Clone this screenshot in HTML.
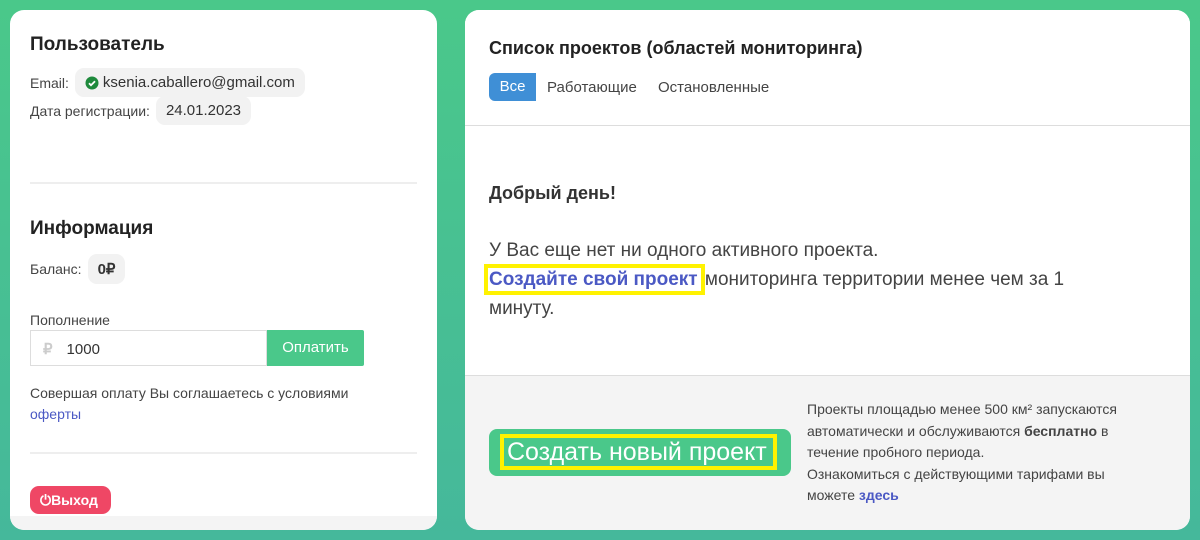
<!DOCTYPE html>
<html><head><meta charset="utf-8"><style>
*{box-sizing:border-box;margin:0;padding:0}
body{width:1200px;height:540px;overflow:hidden;background:linear-gradient(180deg,#4ac88a 0%,#45b89b 100%);font-family:"Liberation Sans",sans-serif;color:#333;position:relative}
.card{position:absolute;background:#fff;border-radius:14px;overflow:hidden}
#l{left:10px;top:10px;width:427px;height:520px}
#r{left:465px;top:10px;width:725px;height:520px}
h2{font-size:19px;font-weight:bold;color:#222}
.row{position:absolute;left:20px;font-size:14px;color:#444;display:flex;align-items:center}
.pill{background:#f2f2f2;border-radius:9px;padding:6px 10px;margin-left:6px;color:#333}
.hr{position:absolute;left:20px;width:387px;height:2px;background:#eee}
</style></head><body>
<div class="card" id="l">
 <h2 style="position:absolute;left:20px;top:24px">Пользователь</h2>
 <div class="row" style="top:58px">Email: <span class="pill" style="display:flex;align-items:center;font-size:15px"><svg width="14" height="14" viewBox="0 0 14 14" style="margin-right:4px"><circle cx="7" cy="7" r="6.5" fill="#1e8a3c"/><path d="M4 7.2l2 2 4-4" stroke="#fff" stroke-width="1.8" fill="none"/></svg>ksenia.caballero@gmail.com</span></div>
 <div class="row" style="top:86px">Дата регистрации: <span class="pill" style="font-size:15px">24.01.2023</span></div>
 <div class="hr" style="top:172px"></div>
 <h2 style="position:absolute;left:20px;top:208px">Информация</h2>
 <div class="row" style="top:244px">Баланс: <span class="pill" style="font-weight:bold;padding:6px 10px;font-size:15px">0₽</span></div>
 <div class="row" style="top:302px">Пополнение</div>
 <div style="position:absolute;left:20px;top:320px;width:237px;height:36px;border:1px solid #ddd;font-size:15px;padding:9px 0 0 12px;color:#333"><span style="color:#ccc;font-weight:bold;margin-right:14px">₽</span>1000</div>
 <div style="position:absolute;left:257px;top:320px;width:97px;height:36px;background:#4ac88a;color:#fff;font-size:15px;text-align:center;line-height:36px;border-radius:0 2px 2px 0">Оплатить</div>
 <div style="position:absolute;left:20px;top:373px;font-size:14px;line-height:21px;color:#444">Совершая оплату Вы соглашаетесь с условиями<br><span style="color:#4b59c4">оферты</span></div>
 <div class="hr" style="top:442px"></div>
 <div style="position:absolute;left:20px;top:476px;width:81px;height:28px;background:#ef4765;border-radius:9px;color:#fff;font-size:14px;font-weight:bold;line-height:28px;padding-left:10px">⏻Выход</div>
 <div style="position:absolute;left:0;top:506px;width:427px;height:14px;background:#f4f4f4"></div>
</div>
<div class="card" id="r">
 <div style="position:absolute;left:0;top:0;width:725px;height:116px;background:#fff;border-bottom:1px solid #ddd"></div>
 <h2 style="position:absolute;left:24px;top:28px;font-size:18px">Список проектов (областей мониторинга)</h2>
 <div style="position:absolute;left:24px;top:63px;width:47px;height:28px;background:#3f8fd6;border-radius:6px 0 0 6px;color:#fff;font-size:15px;line-height:28px;text-align:center">Все</div>
 <div style="position:absolute;left:82px;top:69px;font-size:15px;color:#444">Работающие</div>
 <div style="position:absolute;left:193px;top:69px;font-size:15px;color:#444">Остановленные</div>
 <div style="position:absolute;left:24px;top:173px;font-size:18px;font-weight:bold;color:#333">Добрый день!</div>
 <div style="position:absolute;left:24px;top:226px;font-size:19px;line-height:29px;color:#444;width:640px">У Вас еще нет ни одного активного проекта.<br><span style="color:#4b59c4;font-weight:bold;outline:4px solid #fff200;outline-offset:1px;padding:0 2px 0 0">Создайте свой проект</span> мониторинга территории менее чем за 1 минуту.</div>
 <div style="position:absolute;left:0;top:365px;width:725px;height:155px;background:#f4f4f4;border-top:1px solid #ddd"></div>
 <div style="position:absolute;left:24px;top:419px;width:302px;height:47px;background:#4ac88a;border-radius:8px"></div>
 <div style="position:absolute;left:35px;top:424px;width:277px;height:36px;border:4px solid #fff200;color:#fff;font-size:25px;line-height:28px;padding-left:3px;white-space:nowrap">Создать новый проект</div>
 <div style="position:absolute;left:342px;top:389px;font-size:14px;line-height:21.5px;color:#444;width:340px">Проекты площадью менее 500 км² запускаются автоматически и обслуживаются <b>бесплатно</b> в течение пробного периода.<br>Ознакомиться с действующими тарифами вы можете <b style="color:#4b59c4">здесь</b></div>
</div>
</body></html>
